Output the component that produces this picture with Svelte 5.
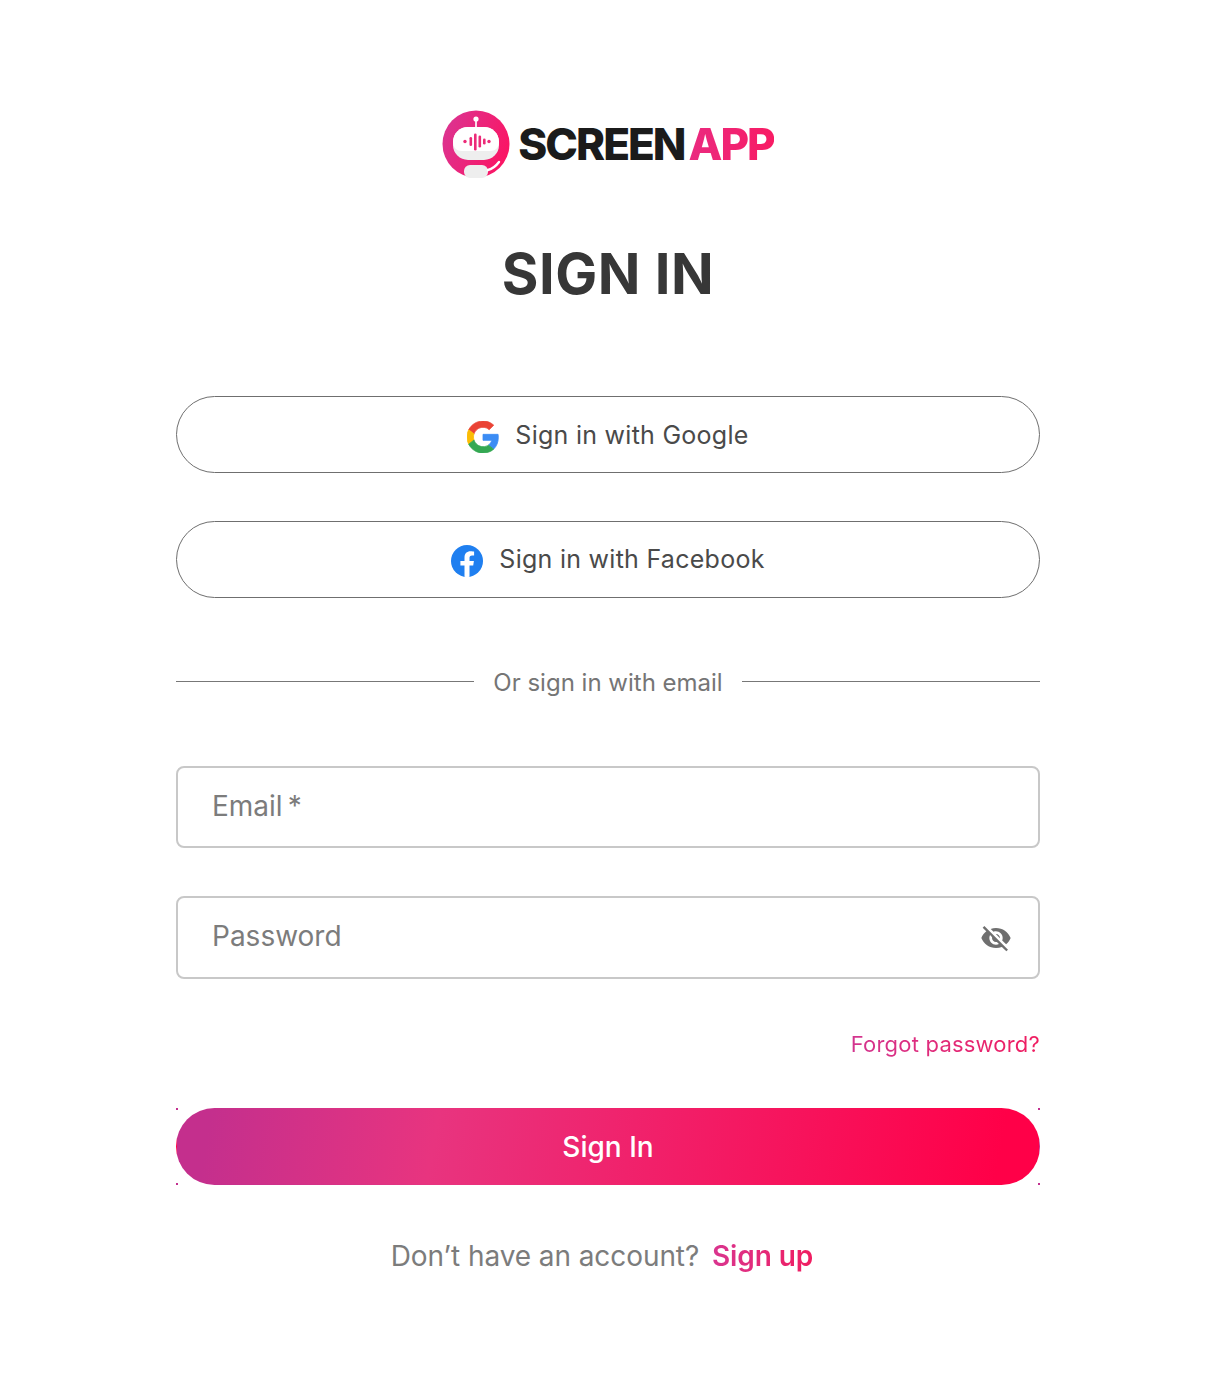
<script lang="ts">
  let email = '';
  let password = '';
</script>

<main class="page">
  <div class="logo">
    <svg width="68" height="68" viewBox="0 0 68 68" aria-hidden="true">
      <defs>
        <linearGradient id="logoGrad" x1="0" y1="0.3" x2="1" y2="0.7">
          <stop offset="0" stop-color="#dc3390" />
          <stop offset="1" stop-color="#fc1462" />
        </linearGradient>
      </defs>
      <circle cx="34" cy="34" r="33.5" fill="url(#logoGrad)" />
      <rect x="33" y="10" width="2" height="9" fill="#f9dce8" />
      <circle cx="34" cy="9" r="2.6" fill="#fff" />
      <rect x="11" y="17" width="46" height="33" rx="15" fill="#eeeeee" />
      <path d="M11 32C11 23 18 17 26 17H42C50 17 57 23 57 32C57 38 53 41 48 41H20C15 41 11 38 11 32Z" fill="#fff" />
      <g fill="#ec2a78">
        <circle cx="23" cy="31.5" r="1.7" />
        <rect x="27.5" y="27" width="2.6" height="9" rx="1.3" />
        <rect x="32" y="23.5" width="2.6" height="17" rx="1.3" />
        <rect x="36.5" y="25.5" width="2.6" height="12" rx="1.3" />
        <rect x="41" y="28.5" width="2.6" height="6" rx="1.3" />
        <circle cx="47" cy="31.5" r="1.7" />
      </g>
      <rect x="22" y="55" width="24" height="13" rx="6" fill="#eeeeee" />
      <path d="M46 60C50 59 54 56 57 52" fill="none" stroke="#fff" stroke-width="2.4" stroke-linecap="round" />
    </svg>
    <span class="wordmark">SCREEN<span class="accent">APP</span></span>
  </div>

  <h1>SIGN IN</h1>

  <div class="socials">
    <button class="social" type="button">
      <svg width="32" height="32" viewBox="0 0 48 48" aria-hidden="true">
        <g stroke-width="1.2">
          <path fill="#EA4335" stroke="#EA4335" d="M24 9.5c3.54 0 6.71 1.22 9.21 3.6l6.85-6.85C35.9 2.38 30.47 0 24 0 14.62 0 6.51 5.38 2.56 13.22l7.98 6.19C12.43 13.72 17.74 9.5 24 9.5z" />
          <path fill="#3b8cf4" stroke="#3b8cf4" d="M46.98 24.55c0-1.57-.15-3.09-.38-4.55H24v9.02h12.94c-.58 2.96-2.26 5.48-4.78 7.18l7.73 6c4.51-4.18 7.09-10.36 7.09-17.65z" />
          <path fill="#FBBC05" stroke="#FBBC05" d="M10.53 28.59c-.48-1.45-.76-2.99-.76-4.59s.27-3.14.76-4.59l-7.98-6.19C.92 16.46 0 20.12 0 24c0 3.88.92 7.54 2.56 10.78l7.97-6.19z" />
          <path fill="#34A853" stroke="#34A853" d="M24 48c6.48 0 11.93-2.13 15.89-5.81l-7.73-6c-2.15 1.45-4.92 2.3-8.16 2.3-6.26 0-11.57-4.22-13.47-9.91l-7.98 6.19C6.51 42.62 14.62 48 24 48z" />
        </g>
      </svg>
      <span>Sign in with Google</span>
    </button>
    <button class="social" type="button">
      <svg width="32" height="32" viewBox="0 0 32 32" aria-hidden="true">
        <circle cx="16" cy="16" r="16" fill="#1f7ff0" />
        <path fill="#fff" d="M22.2 20.6l.7-4.6h-4.4v-3c0-1.3.6-2.5 2.6-2.5h2V6.6s-1.8-.3-3.6-.3c-3.6 0-6 2.2-6 6.2V16h-4.1v4.6h4.1v11.2c.8.1 1.6.2 2.5.2s1.7-.1 2.5-.2V20.6h3.7z" />
      </svg>
      <span>Sign in with Facebook</span>
    </button>
  </div>

  <div class="divider"><span>Or sign in with email</span></div>

  <form class="fields" on:submit|preventDefault>
    <label class="field">
      <input type="email" placeholder={'Email\u2009*'} bind:value={email} />
    </label>
    <label class="field">
      <input type="password" placeholder="Password" bind:value={password} />
      <svg class="eye" width="32" height="32" viewBox="0 0 24 24" aria-hidden="true">
        <path fill="#6f6f6f" d="M12 7c2.76 0 5 2.24 5 5 0 .65-.13 1.26-.36 1.83l2.92 2.92c1.51-1.26 2.7-2.89 3.43-4.75-1.73-4.39-6-7.5-11-7.5-1.4 0-2.74.25-3.98.7l2.16 2.16C10.74 7.13 11.35 7 12 7zM2 4.27l2.28 2.28.46.46C3.08 8.3 1.78 10.02 1 12c1.73 4.39 6 7.5 11 7.5 1.55 0 3.03-.3 4.38-.84l.42.42L19.73 22 21 20.73 3.27 3 2 4.27zM7.53 9.8l1.55 1.55c-.05.21-.08.43-.08.65 0 1.66 1.34 3 3 3 .22 0 .44-.03.65-.08l1.55 1.55c-.67.33-1.41.53-2.2.53-2.76 0-5-2.24-5-5 0-.79.2-1.53.53-2.2zm4.31-.78l3.15 3.15.02-.16c0-1.66-1.34-3-3-3l-.17.01z" />
      </svg>
    </label>
  </form>

  <a class="forgot" href="#forgot">Forgot password?</a>

  <div class="submit-wrap">
    <button class="submit" type="submit">Sign In</button>
  </div>

  <p class="signup">Don’t have an account? <a href="#signup">Sign up</a></p>
</main>

<style>
  :global(body) {
    background: #fff;
    font-family: Inter, "Liberation Sans", sans-serif;
  }

  .page {
    width: 864px;
    margin-left: 176px;
    padding-top: 110px;
    display: flex;
    flex-direction: column;
    height: 1284px;
  }

  .logo {
    display: flex;
    align-items: center;
    justify-content: center;
    gap: 8px;
    height: 68px;
  }

  .wordmark {
    font-size: 44px;
    font-weight: 800;
    letter-spacing: -2px;
    color: #1b1b1b;
    line-height: 68px;
  }

  .accent {
    margin-left: 4px;
    background: linear-gradient(90deg, #ea2a80, #f81c64);
    -webkit-background-clip: text;
    background-clip: text;
    color: transparent;
  }

  h1 {
    margin: 63px 0 0;
    text-align: center;
    font-size: 56px;
    line-height: 66px;
    font-weight: 700;
    letter-spacing: 0.5px;
    color: #373737;
  }

  .socials {
    margin-top: 89px;
    display: flex;
    flex-direction: column;
    gap: 48px;
  }

  .social {
    height: 77px;
    display: flex;
    align-items: center;
    justify-content: center;
    gap: 16px;
    background: #fff;
    border: 1px solid #6f6f6f;
    border-radius: 39px;
    font: 400 25px Inter, "Liberation Sans", sans-serif;
    letter-spacing: 0.27px;
    color: #4a4a4a;
  }

  .social svg {
    margin-top: 5px;
  }

  .social + .social svg {
    margin-top: 3px;
  }

  .social + .social span {
    margin-bottom: 2px;
  }

  .divider {
    margin-top: 68px;
    height: 32px;
    display: flex;
    align-items: center;
    gap: 19px;
    font-size: 24px;
    color: #757575;
  }

  .divider::before,
  .divider::after {
    content: '';
    flex: 1;
    margin-bottom: 2px;
    border-top: 1px solid #777;
  }

  .fields {
    margin-top: 68px;
    display: flex;
    flex-direction: column;
    gap: 48px;
  }

  .field {
    display: block;
    position: relative;
  }

  .field input {
    display: block;
    box-sizing: border-box;
    width: 100%;
    height: 82px;
    padding: 0 34px 2px;
    border: 2px solid #c8c8c8;
    border-radius: 8px;
    background: #fff;
    font: 400 28px Inter, "Liberation Sans", sans-serif;
    color: #444;
    outline: none;
  }

  .field + .field input {
    height: 83px;
    padding-bottom: 4px;
  }

  .field input::placeholder {
    color: #7c7c7c;
    opacity: 1;
  }

  .eye {
    position: absolute;
    right: 28px;
    top: 26px;
  }

  .forgot {
    margin-top: 48px;
    align-self: flex-end;
    font-size: 22px;
    line-height: 34px;
    letter-spacing: 0.2px;
    background: linear-gradient(90deg, #d3358f, #f01d60);
    -webkit-background-clip: text;
    background-clip: text;
    color: transparent;
    text-decoration: none;
  }

  .submit-wrap {
    margin-top: 47px;
    /* the stray pixels sitting on the four corners of the button */
    background:
      linear-gradient(#c2308f, #c2308f) 0 0 / 2px 2px no-repeat,
      linear-gradient(#c2308f, #c2308f) 100% 0 / 2px 2px no-repeat,
      linear-gradient(#c2308f, #c2308f) 0 100% / 2px 2px no-repeat,
      linear-gradient(#c2308f, #c2308f) 100% 100% / 2px 2px no-repeat;
  }

  .submit {
    display: block;
    box-sizing: border-box;
    width: 100%;
    height: 77px;
    border: 1px solid transparent;
    border-radius: 39px;
    background: linear-gradient(100deg, #c42f8d 4%, #e8347f 30%, #ff0048 95%);
    font: 500 28px Inter, "Liberation Sans", sans-serif;
    color: #fff;
  }

  .signup {
    margin: 51px 0 0;
    padding-right: 12px;
    text-align: center;
    font-size: 28px;
    line-height: 40px;
    letter-spacing: -0.08px;
    color: #7c7c7c;
  }

  .signup a {
    margin-left: 5px;
    font-weight: 600;
    background: linear-gradient(90deg, #d9358f, #f01d60);
    -webkit-background-clip: text;
    background-clip: text;
    color: transparent;
    text-decoration: none;
  }
</style>
